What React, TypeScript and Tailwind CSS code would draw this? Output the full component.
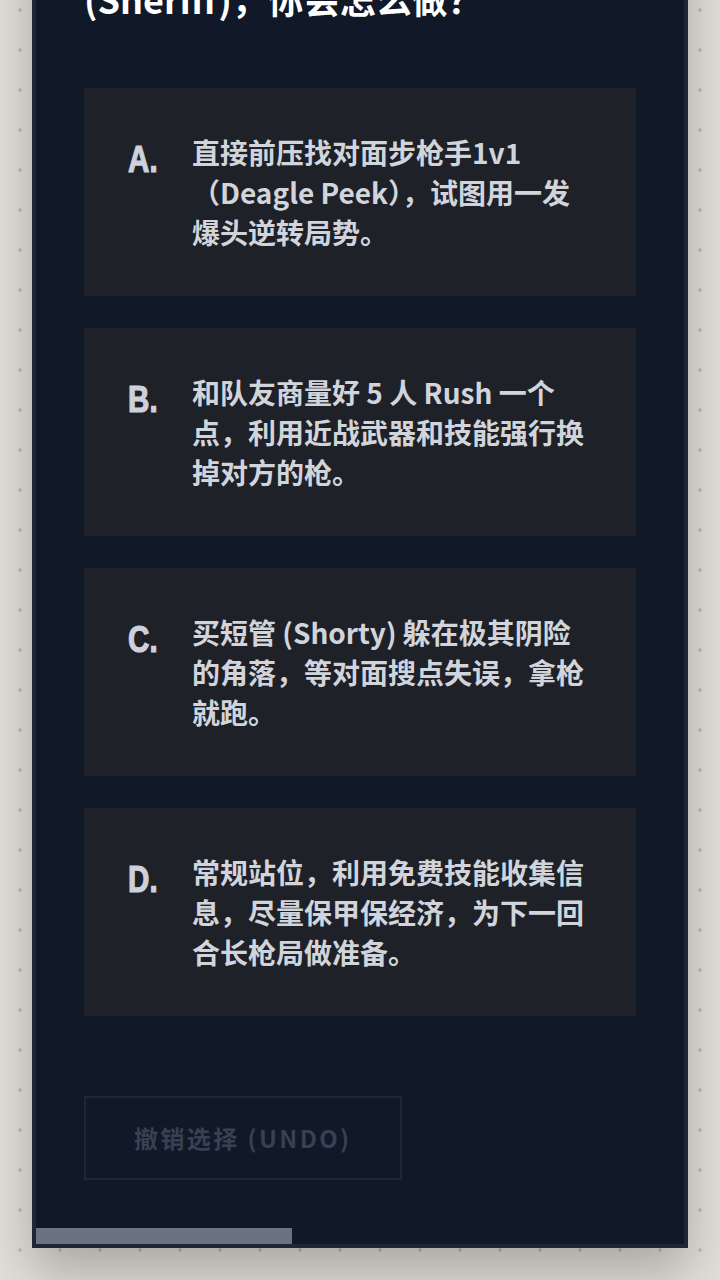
import React from "react";

const options = [
  { key: "A", text: "直接前压找对面步枪手1v1（Deagle Peek），试图用一发爆头逆转局势。" },
  { key: "B", text: "和队友商量好 5 人 Rush 一个点，利用近战武器和技能强行换掉对方的枪。" },
  { key: "C", text: "买短管 (Shorty) 躲在极其阴险的角落，等对面搜点失误，拿枪就跑。" },
  { key: "D", text: "常规站位，利用免费技能收集信息，尽量保甲保经济，为下一回合长枪局做准备。" },
];

const cjk = { fontFamily: '"Noto Sans CJK SC", "Noto Sans", sans-serif' };

export default function App() {
  const progress = 39.5;

  return (
    <div
      className="h-[1280px] overflow-hidden bg-[#e2dfd9] bg-[radial-gradient(circle,#c2beb6_1.5px,transparent_2px)] bg-[size:40px_40px] bg-[position:0_-10px]"
      style={cjk}
    >
      <div className="mx-8 mt-[-126px] flex flex-col border-4 border-[#1f2636] bg-[#111827] shadow-[0_24px_48px_rgba(0,0,0,0.25)]">
        <div className="px-12 pt-12 pb-12">
          <h2 className="mb-[66px] text-[36px] font-bold leading-[48px] text-white">
            <span className="block">经济局，你手里只有一把警长</span>
            <span className="block">(Sheriff)，你会怎么做？</span>
          </h2>

          <div className="flex flex-col gap-8">
            {options.map((o) => (
              <div key={o.key} className="flex bg-[#1f2129] p-11">
                <div className="mt-2 w-16 shrink-0">
                  <span
                    className="inline-block origin-left scale-x-[0.8] text-[37px] font-bold leading-[40px] text-[#cdd1db] [-webkit-text-stroke:1.2px_#cdd1db]"
                    style={{ fontFamily: '"Liberation Sans", Arial, sans-serif' }}
                  >
                    {o.key}.
                  </span>
                </div>
                <p className="text-[28px] font-bold leading-[40px] text-[#d1d5db]">{o.text}</p>
              </div>
            ))}
          </div>

          <button className="mt-20 border-2 border-[#1f2735] px-[48px] py-[24px] text-[24px] font-bold leading-[32px] tracking-[0.1em] text-[#374151]">
            撤销选择 (UNDO)
          </button>
        </div>

        <div className="h-4">
          <div className="h-4 bg-[#6b7280]" style={{ width: `${progress}%` }} />
        </div>
      </div>
    </div>
  );
}
